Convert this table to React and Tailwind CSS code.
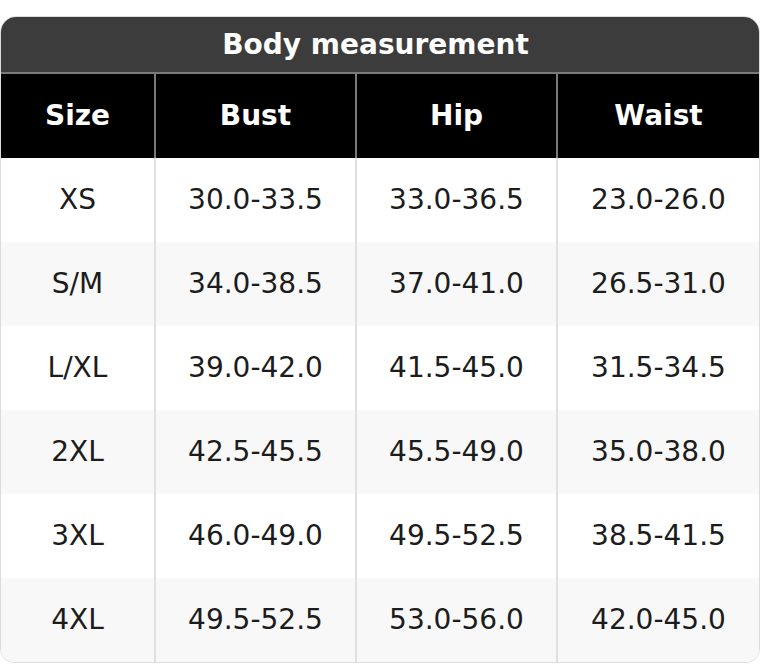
const COLUMNS = ['Size', 'Bust', 'Hip', 'Waist']

const ROWS = [
  ['XS', '30.0-33.5', '33.0-36.5', '23.0-26.0'],
  ['S/M', '34.0-38.5', '37.0-41.0', '26.5-31.0'],
  ['L/XL', '39.0-42.0', '41.5-45.0', '31.5-34.5'],
  ['2XL', '42.5-45.5', '45.5-49.0', '35.0-38.0'],
  ['3XL', '46.0-49.0', '49.5-52.5', '38.5-41.5'],
  ['4XL', '49.5-52.5', '53.0-56.0', '42.0-45.0'],
]

export default function App() {
  return (
    <div className="w-[760px] h-[664px] bg-white pt-[16px]" style={{ fontFamily: '"DejaVu Sans", Verdana, sans-serif' }}>
      <div className="w-[760px] rounded-t-[16px] rounded-b-[14px] border border-[#dcdcdc] overflow-hidden">
        {/* title */}
        <div className="h-[57px] bg-[#3c3c3c] border-b-2 border-[#7a7a7a] flex items-center justify-center pr-[9px]">
          <span className="text-white text-[28px] font-bold leading-none">Body measurement</span>
        </div>

        {/* header */}
        <div className="grid grid-cols-[153px_201px_201px_1fr] h-[84px] bg-black">
          {COLUMNS.map((c, i) => (
            <div
              key={c}
              className={'flex items-center justify-center text-white text-[28px] font-bold ' + (i > 0 ? 'border-l-2 border-[#7a7a7a]' : '')}
            >
              {c}
            </div>
          ))}
        </div>

        {/* body */}
        {ROWS.map((r, ri) => (
          <div
            key={r[0]}
            className={'grid grid-cols-[153px_201px_201px_1fr] h-[84px] ' + (ri % 2 ? 'bg-[#f8f8f8]' : 'bg-white')}
          >
            {r.map((v, i) => (
              <div
                key={i}
                className={'flex items-center justify-center text-[#1c1c1c] text-[28px] ' + (i > 0 ? 'border-l-2 border-[#e0e0e0]' : '')}
              >
                {v}
              </div>
            ))}
          </div>
        ))}
      </div>
    </div>
  )
}
